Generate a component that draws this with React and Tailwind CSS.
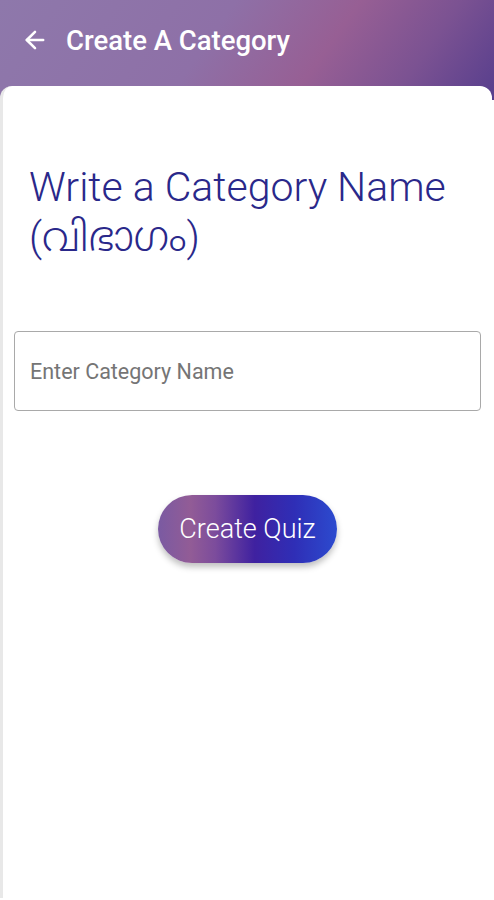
import { ArrowLeft } from "lucide-react";

export default function App() {
  return (
    <div
      className="flex h-[900px] w-[494px] flex-col overflow-hidden bg-white bg-[linear-gradient(125deg,#8e78ab_0%,#8e70a7_42%,#975f94_64%,#7b5292_82%,#573e8d_100%)] bg-[length:100%_100px] bg-no-repeat"
      style={{ fontFamily: "Roboto, 'Noto Sans', 'Noto Sans Malayalam', sans-serif" }}
    >
      <header className="flex h-[86px] shrink-0 items-start px-[21px] pt-[25px]">
        <ArrowLeft className="mt-[1px] h-[28px] w-[28px] text-white" strokeWidth={2.2} />
        <h1 className="ml-[17px] text-[27.5px] font-medium leading-[32px] text-white">Create A Category</h1>
      </header>

      <main className="mr-[2px] mb-[2px] flex flex-1 flex-col rounded-t-[12px] border-l-[3px] border-[#e8e8e8] bg-white">
        <h2 className="mt-[76px] pl-[26px] text-[41px] font-light leading-[50px] text-[#2a288a]">
          Write a Category Name
          <br />
          (വിഭാഗം)
        </h2>

        <input
          type="text"
          placeholder="Enter Category Name"
          className="mx-[11px] mt-[69px] h-[80px] rounded-[4px] border border-[#a9a9a9] bg-white px-[15px] text-[21.5px] text-[#333] outline-none placeholder:text-[#757575]"
        />

        <div className="mt-[84px] flex justify-center">
          <button
            type="button"
            className="h-[68px] w-[179px] rounded-full bg-[linear-gradient(90deg,#7a5aa2_0%,#925c96_18%,#7c4c9c_32%,#3f21a0_54%,#2f2eb6_76%,#2c4bcf_100%)] text-[27px] font-light text-white shadow-[0_4px_6px_rgba(0,0,0,0.25)]"
          >
            Create Quiz
          </button>
        </div>
      </main>
    </div>
  );
}
